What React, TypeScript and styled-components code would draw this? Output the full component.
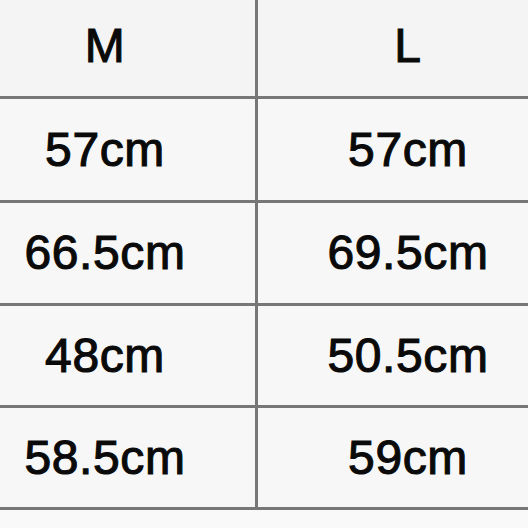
import React from "react";
import styled, { createGlobalStyle } from "styled-components";

const Global = createGlobalStyle`
  html, body {
    margin: 0;
    padding: 0;
    background: #f9f9f9;
    overflow: hidden;
  }
  body {
    width: 528px;
    height: 528px;
    font-family: "Liberation Sans", Arial, sans-serif;
  }
`;

const Page = styled.div`
  width: 528px;
  height: 528px;
  overflow: hidden;
  background: #f9f9f9;
`;

const Table = styled.div`
  display: grid;
  grid-template-columns: 303px 300px;
  grid-template-rows: 99px 104px 103px 102px 102px;
  margin-left: -45px;
`;

const Cell = styled.div<{ $left?: boolean; $header?: boolean }>`
  display: flex;
  align-items: center;
  justify-content: center;
  box-sizing: border-box;
  background: ${(p) => (p.$header ? "#f4f4f4" : "#f7f7f7")};
  border-bottom: 3px solid #777777;
  border-right: ${(p) => (p.$left ? "3px solid #777777" : "none")};
  color: #0a0a0a;
  font-family: "Liberation Sans", Arial, sans-serif;
  font-weight: 400;
  font-size: 48px;
  letter-spacing: 0.6px;
  -webkit-text-stroke: 1.1px #0a0a0a;
  line-height: 1;
  padding-bottom: ${(p) => (p.$header ? "4px" : "0")};
`;

const rows: [string, string][] = [
  ["57cm", "57cm"],
  ["66.5cm", "69.5cm"],
  ["48cm", "50.5cm"],
  ["58.5cm", "59cm"],
];

export default function App() {
  return (
    <Page>
      <Global />
      <Table>
        <Cell $left $header>M</Cell>
        <Cell $header>L</Cell>
        {rows.map(([m, l], i) => (
          <React.Fragment key={i}>
            <Cell $left>{m}</Cell>
            <Cell>{l}</Cell>
          </React.Fragment>
        ))}
      </Table>
    </Page>
  );
}
